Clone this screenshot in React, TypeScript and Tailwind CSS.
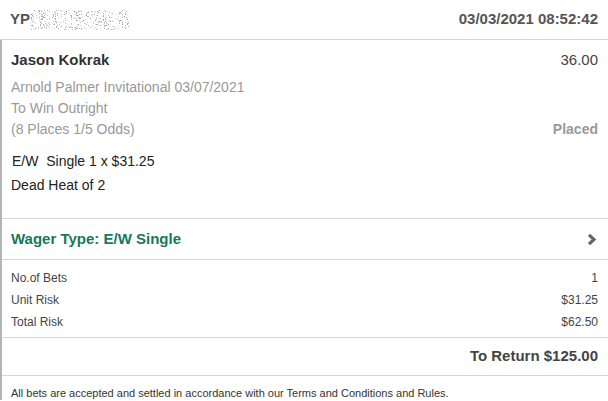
import React from 'react';

/* Bet receipt card — single E/W wager on a golf outright */

const FONT = { fontFamily: '"Liberation Sans", Arial, sans-serif' };

// deterministic speckle used to mask the account number
function Masked() {
  const dots: { x: number; y: number; o: number }[] = [];
  let seed = 7;
  const rnd = () => {
    seed = (seed * 9301 + 49297) % 233280;
    return seed / 233280;
  };
  for (let i = 0; i < 420; i++) {
    dots.push({ x: Math.floor(rnd() * 98), y: Math.floor(rnd() * 20), o: 0.15 + rnd() * 0.45 });
  }
  return (
    <svg width="98" height="20" viewBox="0 0 98 20" className="block">
      {dots.map((d, i) => (
        <rect key={i} x={d.x} y={d.y} width="1" height="1" fill="#666" opacity={d.o} />
      ))}
    </svg>
  );
}

function Row({ label, value }: { label: string; value: string }) {
  return (
    <div className="flex h-[22px] items-center justify-between text-[12px] text-[#444]">
      <span>{label}</span>
      <span>{value}</span>
    </div>
  );
}

export default function App() {
  return (
    <div className="h-[401px] w-[608px] overflow-hidden bg-white" style={FONT}>
      {/* header */}
      <div className="flex h-[40px] items-center justify-between border-b border-[#d6d6d6] pl-[10px] pr-[10px]">
        <div className="flex items-center gap-[1px] text-[15px] font-bold text-[#555]">
          <span>YP</span>
          <Masked />
        </div>
        <div className="text-[15px] font-bold text-[#555]">03/03/2021 08:52:42</div>
      </div>

      <div className="border-l-2 border-[#b4b4b4]">
        {/* selection */}
        <div className="border-b border-[#d6d6d6] pl-[9px] pr-[10px] pt-[11px] pb-[21px]">
          <div className="flex h-[18px] items-center justify-between text-[15px]">
            <span className="font-bold text-[#333]">Jason Kokrak</span>
            <span className="text-[#444]">36.00</span>
          </div>
          <div className="mt-[8px] text-[14px] leading-[21px] text-[#999]">
            <div>Arnold Palmer Invitational 03/07/2021</div>
            <div>To Win Outright</div>
            <div className="flex justify-between">
              <span>(8 Places 1/5 Odds)</span>
              <span className="font-bold">Placed</span>
            </div>
          </div>
          <div className="mt-[9px] text-[14px] leading-[24px] text-[#222]">
            <div className="pl-[1px] whitespace-pre">E/W  Single 1 x $31.25</div>
            <div>Dead Heat of 2</div>
          </div>
        </div>

        {/* wager type */}
        <div className="flex h-[41px] items-center justify-between border-b border-[#d6d6d6] pl-[9px] pr-[10px]">
          <span className="text-[15px] font-bold text-[#17785a]">Wager Type: E/W Single</span>
          <svg width="10" height="13" viewBox="0 0 10 13" className="mr-[1px]">
            <path d="M2 1.8 L7 6.5 L2 11.2" fill="none" stroke="#666" strokeWidth="3.2" />
          </svg>
        </div>

        {/* totals */}
        <div className="border-b border-[#d6d6d6] pl-[9px] pr-[10px] pt-[7px] pb-[4px]">
          <Row label="No.of Bets" value="1" />
          <Row label="Unit Risk" value="$31.25" />
          <Row label="Total Risk" value="$62.50" />
        </div>

        <div className="flex h-[38px] items-center justify-end border-b border-[#d6d6d6] pr-[10px]">
          <span className="text-[15px] font-bold text-[#444]">To Return $125.00</span>
        </div>

        <div className="pl-[9px] pt-[10px] text-[11px] leading-[14px] text-[#333]">
          All bets are accepted and settled in accordance with our Terms and Conditions and Rules.
        </div>
      </div>
    </div>
  );
}
